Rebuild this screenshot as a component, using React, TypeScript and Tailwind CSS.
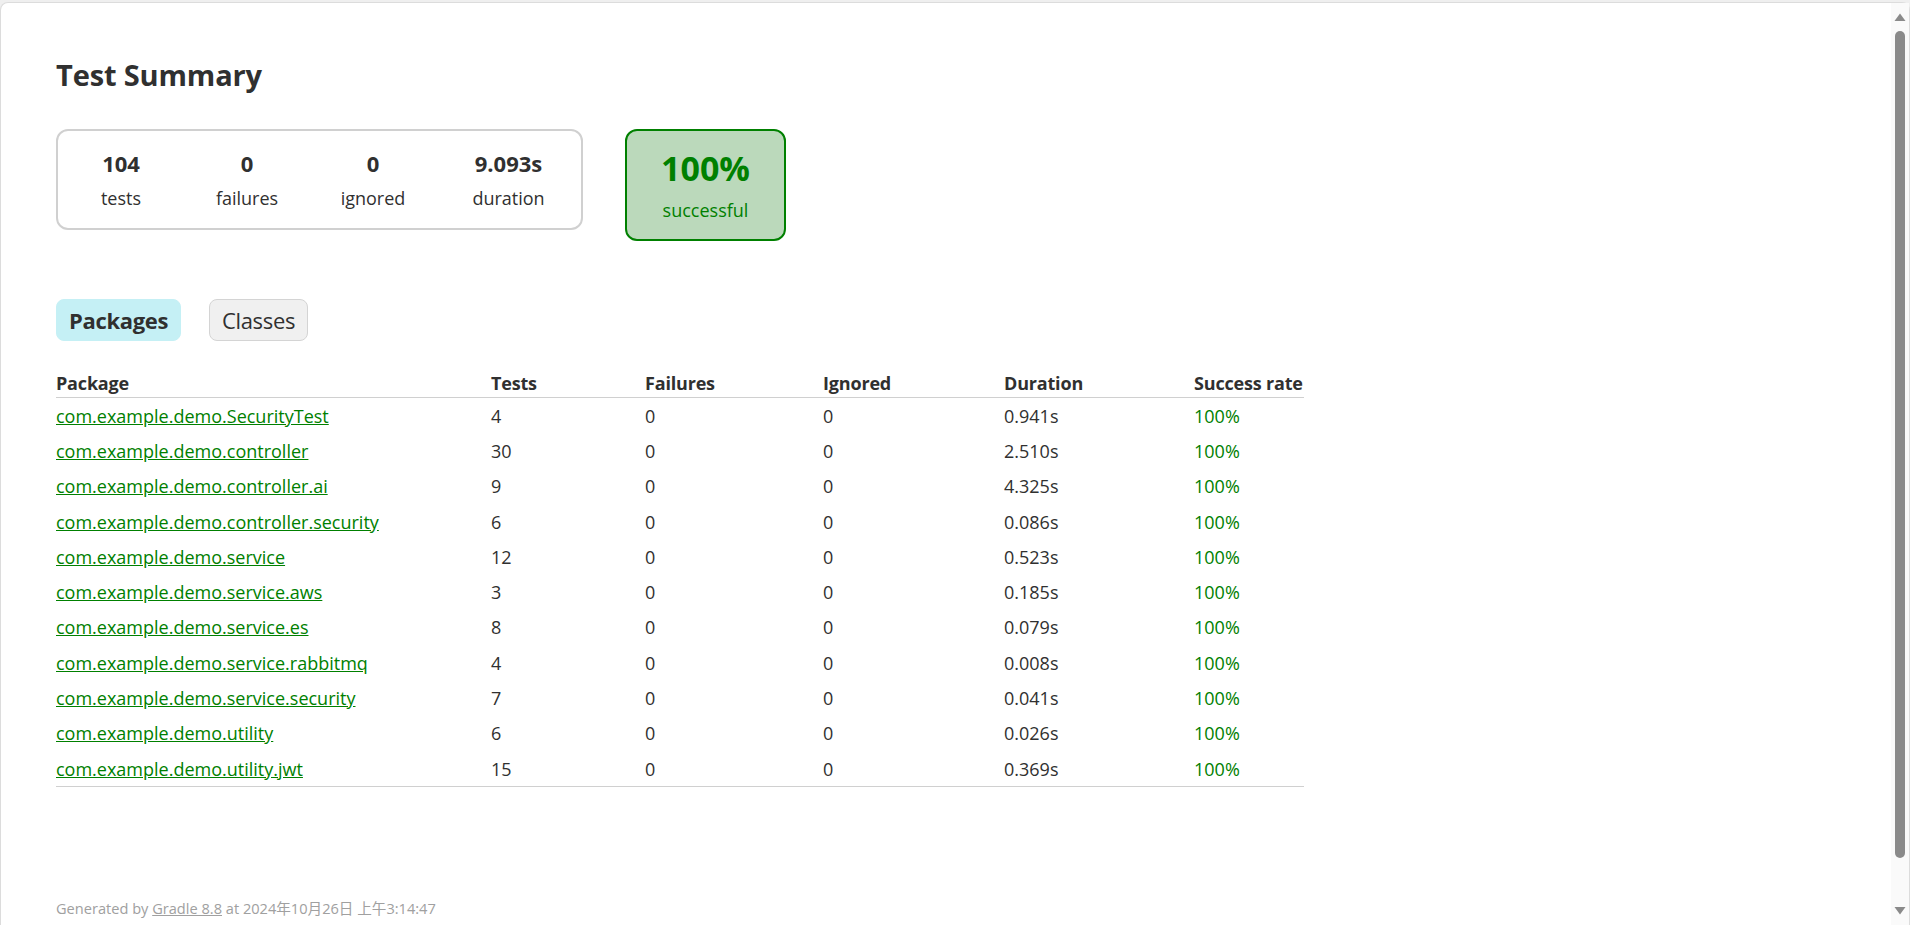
import React from "react";

const stats = [
  { value: "104", label: "tests", w: "w-[126px]" },
  { value: "0", label: "failures", w: "w-[126px]" },
  { value: "0", label: "ignored", w: "w-[126px]" },
  { value: "9.093s", label: "duration", w: "w-[145px]" },
];

const packages = [
  ["com.example.demo.SecurityTest", "4", "0.941s"],
  ["com.example.demo.controller", "30", "2.510s"],
  ["com.example.demo.controller.ai", "9", "4.325s"],
  ["com.example.demo.controller.security", "6", "0.086s"],
  ["com.example.demo.service", "12", "0.523s"],
  ["com.example.demo.service.aws", "3", "0.185s"],
  ["com.example.demo.service.es", "8", "0.079s"],
  ["com.example.demo.service.rabbitmq", "4", "0.008s"],
  ["com.example.demo.service.security", "7", "0.041s"],
  ["com.example.demo.utility", "6", "0.026s"],
  ["com.example.demo.utility.jwt", "15", "0.369s"],
];

const cols = "grid grid-cols-[435px_154px_178px_181px_190px_110px] whitespace-nowrap";

function Scrollbar() {
  return (
    <div className="flex w-[18px] flex-col items-center bg-[#fafafa]">
      <svg width="12" height="8" viewBox="0 0 12 8" className="mt-[10px]">
        <polygon points="0.5,8 6,0.5 11.5,8" fill="#8a8a8a" />
      </svg>
      <div className="mt-[10px] h-[827px] w-[10px] rounded-full bg-[#8a8a8a]" />
      <svg width="12" height="8" viewBox="0 0 12 8" className="mb-[10px] mt-auto">
        <polygon points="0.5,0 11.5,0 6,7.5" fill="#8a8a8a" />
      </svg>
    </div>
  );
}

export default function App() {
  return (
    <div
      className="h-[925px] w-full overflow-hidden bg-[#efefef] pt-[2px] text-[#303030]"
      style={{ fontFamily: '"Open Sans", "Noto Sans CJK SC", sans-serif' }}
    >
      <div className="flex h-[923px] rounded-t-[8px] border-x border-t border-[#dcdcdc] bg-white">
        <div className="flex-1 pl-[55px] pt-[54px]">
          <h1 className="text-[29px] font-bold leading-[36px] tracking-[-0.005em]">Test Summary</h1>

          <div className="mt-[36px] flex items-start">
            <div className="flex rounded-[12px] border-2 border-[#d0d0d0]">
              {stats.map((s) => (
                <div key={s.label} className={`${s.w} flex flex-col items-center py-[17px]`}>
                  <p className="text-[22px] font-bold leading-[30px]">{s.value}</p>
                  <p className="mt-[7px] text-[18px] leading-[26px]">{s.label}</p>
                </div>
              ))}
            </div>
            <div className="ml-[42px] flex w-[161px] flex-col items-center rounded-[12px] border-2 border-[#008000] bg-[#bbd9bb] py-[16px] text-[#008000]">
              <p className="text-[34px] font-bold leading-[42px]">100%</p>
              <p className="mt-[8px] text-[18px] leading-[26px]">successful</p>
            </div>
          </div>

          <div className="mt-[58px] flex gap-[28px] tracking-[-0.02em]">
            <div className="flex h-[42px] w-[125px] items-center justify-center rounded-[8px] border border-[#c5f0f5] bg-[#c5f0f5] text-[22px] font-bold">
              Packages
            </div>
            <div className="flex h-[42px] w-[99px] items-center justify-center rounded-[8px] border border-[#d4d4d4] bg-[#f0f0f0] text-[22px]">
              Classes
            </div>
          </div>

          <div className="mt-[29px] w-[1248px] border-b border-[#d0d0d0] text-[18px]">
            <div className={`${cols} border-b border-[#d0d0d0] pb-[1px] font-bold leading-[26px] tracking-[-0.01em]`}>
              <div>Package</div>
              <div>Tests</div>
              <div>Failures</div>
              <div>Ignored</div>
              <div>Duration</div>
              <div>Success rate</div>
            </div>
            {packages.map(([name, tests, duration]) => (
              <div key={name} className={`${cols} h-[35.3px] items-center leading-[26px]`}>
                <div>
                  <a href="#" className="text-[#008000] underline">
                    {name}
                  </a>
                </div>
                <div>{tests}</div>
                <div>0</div>
                <div>0</div>
                <div>{duration}</div>
                <div className="text-[#008000]">100%</div>
              </div>
            ))}
          </div>

          <p className="mt-[111px] whitespace-nowrap text-[14.6px] leading-[20px] text-[#a0a0a0]">
            Generated by{" "}
            <a href="#" className="text-[#a0a0a0] underline">
              Gradle 8.8
            </a>{" "}
            at 2024年10月26日 上午3:14:47
          </p>
        </div>
        <Scrollbar />
      </div>
    </div>
  );
}
